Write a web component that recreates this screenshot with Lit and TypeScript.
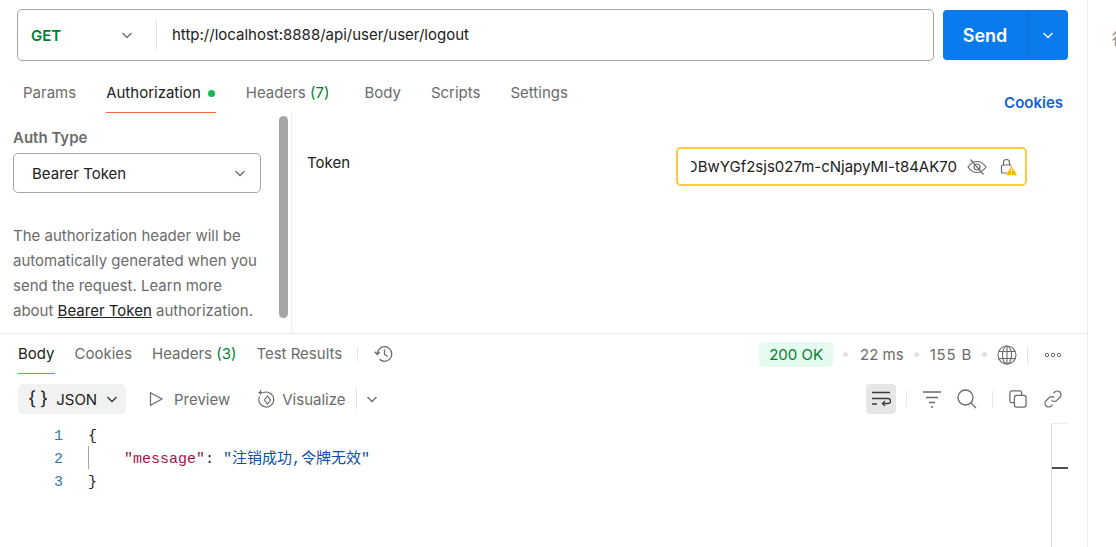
import { LitElement, html, css } from "lit";
import { customElement } from "lit/decorators.js";

const chev = (size = 16, color = "#6b6b6b", sw = 1.3) => html`<svg width=${size} height=${size} viewBox="0 0 16 16" fill="none" stroke=${color} stroke-width=${sw}><path d="M3.5 6l4.5 4.5L12.5 6"/></svg>`;

@customElement("app-root")
export class AppRoot extends LitElement {
  static styles = css`
    :host { display: block; width: 1116px; height: 547px; overflow: hidden; background: #fff; font-family: Inter, "Noto Sans CJK SC", sans-serif; font-size: 15px; color: #212121; }
    * { box-sizing: border-box; }
    svg { display: block; flex: none; }
    .app { display: flex; height: 547px; }
    .main { width: 1088px; border-right: 1px solid #ededed; display: flex; flex-direction: column; flex: none; }
    .side { flex: 1; padding: 27px 0 0 24px; color: #8a8a8a; overflow: hidden; white-space: nowrap; }

    .urlrow { display: flex; height: 61px; padding: 9px 19px 0 17px; gap: 9px; }
    .urlbar { flex: 1; height: 52px; border: 1px solid #a6a6a6; border-radius: 5px; display: flex; align-items: center; }
    .method { width: 139px; height: 30px; display: flex; align-items: center; justify-content: space-between; padding: 0 21px 0 13px; border-right: 1px solid #e6e6e6; font-weight: 600; color: #007f31; margin-right: 15px; }
    .url { color: #212121; position: relative; top: -1px; }
    .send { width: 125px; height: 50px; margin-top: 1px; background: #097bed; border-radius: 4px; color: #fff; display: flex; }
    .send-l { width: 85px; border-right: 1px solid #0a6fd6; display: flex; align-items: center; justify-content: center; font-weight: 600; font-size: 18px; }
    .send-r { flex: 1; display: flex; align-items: center; justify-content: center; }

    .tabs { height: 52px; display: flex; padding-left: 23px; }
    .tab { height: 52px; padding-top: 23px; line-height: 18px; color: #6b6b6b; margin-right: 30px; display: flex; white-space: pre; }
    .tab.on { color: #212121; border-bottom: 1px solid #f26b3a; }
    .dot { width: 7px; height: 7px; border-radius: 50%; background: #0cbb52; margin: 6px 1px 0 7px; }
    .n { color: #007f31; }
    .cookies { margin-left: auto; margin-right: 24px; margin-top: 33px; color: #0f62d6; font-weight: 600; line-height: 18px; }

    .auth { height: 221px; display: flex; border-bottom: 1px solid #ededed; flex: none; }
    .left { width: 292px; border-right: 1px solid #ededed; padding: 16px 30px 0 13px; position: relative; }
    .lbl { font-weight: 600; color: #6b6b6b; line-height: 18px; }
    .select { width: 248px; height: 40px; margin-top: 6px; border: 1px solid #a6a6a6; border-radius: 5px; display: flex; align-items: center; justify-content: space-between; padding: 0 12px 0 18px; }
    .desc { margin-top: 30px; width: 250px; line-height: 25px; color: #6b6b6b; white-space: nowrap; }
    .desc a { color: #212121; text-decoration: underline; }
    .thumb { position: absolute; left: 279px; top: 3px; width: 9px; height: 202px; border-radius: 5px; background: #a6a6a6; }
    .right { flex: 1; display: flex; justify-content: space-between; padding: 34px 60px 0 15px; }
    .right .tok { line-height: 18px; color: #212121; margin-top: 7px; }
    .token { width: 351px; height: 39px; border: 2px solid #ffc940; border-radius: 5px; display: flex; align-items: center; padding-left: 13px; }
    .token .v { width: 266px; overflow: hidden; white-space: nowrap; direction: rtl; color: #212121; text-align: left; }
    .token .ico { margin-left: 10px; }
    .token .ico2 { margin-left: 11px; }

    .restabs { height: 41px; display: flex; padding-left: 18px; align-items: flex-start; flex: none; }
    .rtab { height: 40px; padding-top: 11px; line-height: 18px; color: #6b6b6b; margin-right: 20px; white-space: pre; }
    .rtab.on { color: #212121; border-bottom: 1px solid #f26b3a; }
    .rtab.last { margin-right: 15px; }
    .hvs { width: 1px; height: 15px; margin: 13px 16px 0 0; background: #e6e6e6; }
    .hist { margin-top: 10px; }
    .meta { margin-left: auto; display: flex; align-items: center; height: 25px; margin-top: 8px; color: #6b6b6b; padding-right: 25px; }
    .ok { background: #e6fbef; color: #007f31; border-radius: 4px; padding: 0 10px; height: 25px; line-height: 25px; }
    .sep { width: 5px; height: 5px; border-radius: 50%; background: #e2e2e2; margin: 0 11px 0 10px; }
    .sep.a { margin-right: 12px; }
    .sep.c { margin-right: 10px; }
    .size { letter-spacing: .8px; }
    .vs { width: 1px; height: 16px; background: #e6e6e6; margin: 0 16px 0 10px; }

    .tools { height: 48px; display: flex; align-items: center; padding: 0 25px 0 18px; flex: none; }
    .fmt { width: 108px; height: 30px; background: #f2f2f2; border-radius: 5px; display: flex; align-items: center; padding-left: 10px; color: #212121; }
    .fmt .br { font-size: 19px; margin-right: 4px; letter-spacing: 4px; line-height: 24px; }
    .tbtn { display: flex; align-items: center; color: #6b6b6b; }
    .tools .rest { margin-left: auto; display: flex; align-items: center; }
    .wrap { width: 30px; height: 30px; background: #e6e6e6; border-radius: 4px; display: flex; align-items: center; justify-content: center; }
    .tvs { width: 1px; height: 16px; background: #e6e6e6; }

    .code { flex: 1; display: flex; font-family: "Liberation Mono", "Noto Sans CJK SC", monospace; font-size: 15px; line-height: 23px; min-height: 0; }
    .nums { width: 63px; text-align: right; color: #2f7ba8; padding-top: 2px; }
    .lines { flex: 1; padding: 2px 0 0 25px; position: relative; }
    .l { height: 23px; white-space: pre; }
    .guide { position: absolute; left: 25px; top: 23px; width: 1px; height: 23px; background: #a6a6a6; }
    .b { color: #1a1a1a; }
    .k { color: #a3134a; }
    .s { color: #0d4ea6; }
    .mini { width: 17px; margin-right: 19px; border-left: 1px solid #d9d9d9; border-top: 1px solid #ededed; padding-top: 43px; flex: none; }
    .mini i { display: block; height: 2px; background: #4d4d4d; }
  `;

  render() {
    return html`<div class="app">
      <div class="main">
        <div class="urlrow">
          <div class="urlbar">
            <div class="method"><span>GET</span>${chev(16)}</div>
            <div class="url">http://localhost:8888/api/user/user/logout</div>
          </div>
          <div class="send"><div class="send-l">Send</div><div class="send-r">${chev(16, "#fff", 1.3)}</div></div>
        </div>
        <div class="tabs">
          <div class="tab">Params</div>
          <div class="tab on">Authorization<span class="dot"></span></div>
          <div class="tab" style="margin-right:35px">Headers <span class="n">(7)</span></div>
          <div class="tab">Body</div>
          <div class="tab">Scripts</div>
          <div class="tab">Settings</div>
          <div class="cookies">Cookies</div>
        </div>
        <div class="auth">
          <div class="left">
            <div class="lbl">Auth Type</div>
            <div class="select"><span>Bearer Token</span>${chev(16)}</div>
            <div class="desc">The authorization header will be<br/>automatically generated when you<br/>send the request. Learn more<br/>about <a>Bearer Token</a> authorization.</div>
            <div class="thumb"></div>
          </div>
          <div class="right">
            <div class="tok">Token</div>
            <div class="token">
              <div class="v"><bdi>DBwYGf2sjs027m-cNjapyMI-t84AK70</bdi></div>
              <svg class="ico" width="20" height="20" viewBox="0 0 20 20" fill="none" stroke="#6b6b6b" stroke-width="1.2"><path d="M1 10c2.5-3.6 5.6-5.5 9-5.5s6.5 1.9 9 5.5c-2.5 3.6-5.6 5.5-9 5.5s-6.5-1.900-9-5.500z"/><circle cx="10" cy="10" r="3"/><path d="M3.500 2.500l13 15"/></svg>
              <svg class="ico2" width="20" height="20" viewBox="0 0 20 20" fill="none"><path d="M5.500 8V5.500a3 3 0 016 0V8" stroke="#6b6b6b" stroke-width="1.200"/><rect x="3.500" y="8" width="10" height="8" rx="1.200" stroke="#6b6b6b" stroke-width="1.200"/><path d="M13.500 8.500L19.500 18.500H7.500z" fill="#ffb400" stroke="#fff" stroke-width=".6"/><path d="M13.500 11.500v3.500M13.500 16v1.200" stroke="#fff" stroke-width="1.200"/></svg>
            </div>
          </div>
        </div>
        <div class="restabs">
          <div class="rtab on">Body</div>
          <div class="rtab">Cookies</div>
          <div class="rtab">Headers <span class="n">(3)</span></div>
          <div class="rtab last">Test Results</div>
          <i class="hvs"></i>
          <svg class="hist" width="20" height="20" viewBox="0 0 20 20" fill="none" stroke="#6b6b6b" stroke-width="1.300"><path d="M3.200 10a7.300 7.300 0 117.300 7.300 7.300 7.300 0 01-5-2"/><path d="M.8 7.800l2.400 2.700 2.600-2.500"/><path d="M10.500 5.500v5l3.200 2"/></svg>
          <div class="meta">
            <span class="ok">200 OK</span><i class="sep a"></i><span>22 ms</span><i class="sep"></i><span class="size">155 B</span><i class="sep c"></i>
            <svg width="20" height="20" viewBox="0 0 20 20" fill="none" stroke="#6b6b6b" stroke-width="1.100"><circle cx="10" cy="10" r="9"/><ellipse cx="10" cy="10" rx="4.500" ry="9"/><path d="M10 1v18M1.800 6.500h16.400M1.800 13.500h16.400"/></svg>
            <i class="vs"></i>
            <svg width="18" height="6" viewBox="0 0 18 6" fill="none" stroke="#6b6b6b" stroke-width="1"><circle cx="3" cy="3" r="1.700"/><circle cx="9" cy="3" r="1.700"/><circle cx="15" cy="3" r="1.700"/></svg>
          </div>
        </div>
        <div class="tools">
          <div class="fmt"><span class="br">{}</span><span>JSON</span><span style="margin-left:7px">${chev(16, "#3a3a3a", 1.4)}</span></div>
          <div class="tbtn" style="margin-left:22px">
            <svg width="16" height="16" viewBox="0 0 16 16" fill="none" stroke="#6b6b6b" stroke-width="1.200"><path d="M2.500 1.800v12.400L14 8z"/></svg>
            <span style="margin-left:10px">Preview</span>
          </div>
          <div class="tbtn" style="margin-left:26px">
            <svg width="20" height="20" viewBox="0 0 20 20" fill="none" stroke="#6b6b6b" stroke-width="1.200"><path d="M7 3.800a7.500 7.500 0 11-3.500 3.500"/><path d="M11.500 7l-3 4 3 4 3-4z"/><path d="M4.500 .8l.8 2 2 .8-2 .8-.8 2-.8-2-2-.8 2-.8z" fill="#6b6b6b" stroke="none"/></svg>
            <span style="margin-left:6px">Visualize</span>
          </div>
          <i class="tvs" style="margin-left:10px;height:20px"></i>
          <span style="margin-left:7px">${chev(16)}</span>
          <div class="rest">
            <div class="wrap"><svg width="20" height="16" viewBox="0 0 20 16" fill="none" stroke="#3a3a3a" stroke-width="1.300"><path d="M1 1.500h18M1 7.500h16a2.500 2.500 0 010 5h-5.500M1 13h5"/><path d="M14 10l-2.500 2.500 2.500 2.500"/></svg></div>
            <i class="tvs" style="margin:0 16px 0 10px"></i>
            <svg width="18" height="18" viewBox="0 0 18 18" fill="none" stroke="#6b6b6b" stroke-width="1.300"><path d="M0 2h18M3 7.500h12M6 12.500h6M8 17h2"/></svg>
            <svg style="margin-left:16px" width="20" height="20" viewBox="0 0 20 20" fill="none" stroke="#6b6b6b" stroke-width="1.300"><circle cx="8.500" cy="8.500" r="7.500"/><path d="M14 14l5 5"/></svg>
            <i class="tvs" style="margin:0 16px 0 15px"></i>
            <svg width="18" height="18" viewBox="0 0 20 20" fill="none" stroke="#6b6b6b" stroke-width="1.400"><rect x="6" y="6" width="13" height="13" rx="2.500"/><path d="M6 14H3a2 2 0 01-2-2V3a2 2 0 012-2h9a2 2 0 012 2v3"/></svg>
            <svg style="margin-left:17px" width="18" height="18" viewBox="0 0 20 20" fill="none" stroke="#6b6b6b" stroke-width="1.400"><path d="M8.500 11.500a4 4 0 005.700 0l3.500-3.500a4 4 0 00-5.700-5.700l-1.500 1.500"/><path d="M11.500 8.500a4 4 0 00-5.700 0l-3.500 3.500a4 4 0 005.700 5.700l1.500-1.500"/></svg>
          </div>
        </div>
        <div class="code">
          <div class="nums"><div class="l">1</div><div class="l">2</div><div class="l">3</div></div>
          <div class="lines">
            <i class="guide"></i>
            <div class="l"><span class="b">{</span></div>
            <div class="l">    <span class="k">"message"</span>: <span class="s">"注销成功,令牌无效"</span></div>
            <div class="l"><span class="b">}</span></div>
          </div>
          <div class="mini"><i></i></div>
        </div>
      </div>
      <div class="side">行</div>
    </div>`;
  }
}
